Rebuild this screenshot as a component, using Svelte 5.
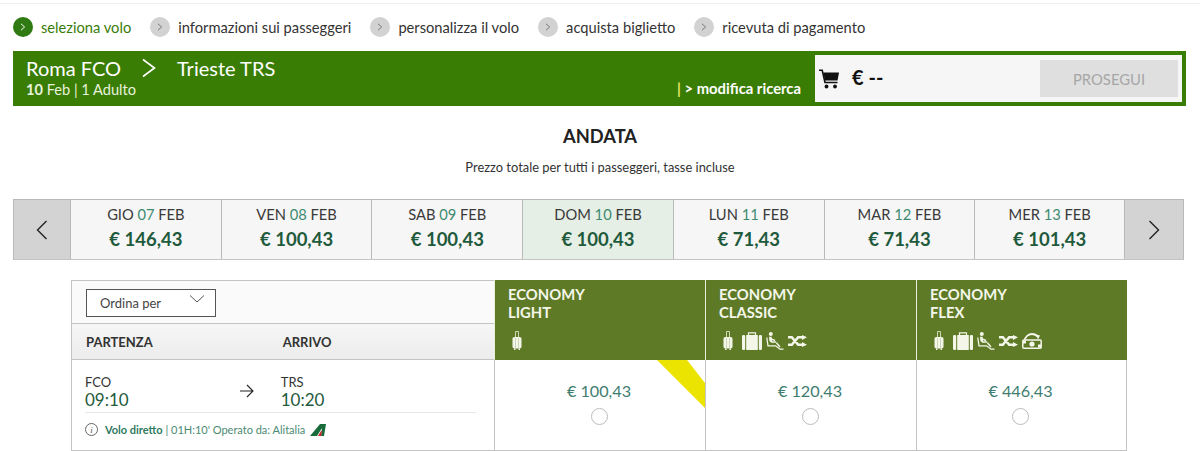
<script lang="ts">
	const STEPS = ['seleziona volo', 'informazioni sui passeggeri', 'personalizza il volo', 'acquista biglietto', 'ricevuta di pagamento'];
	const DAYS = [
		{ dow: 'GIO', num: '07', price: '€ 146,43' },
		{ dow: 'VEN', num: '08', price: '€ 100,43' },
		{ dow: 'SAB', num: '09', price: '€ 100,43' },
		{ dow: 'DOM', num: '10', price: '€ 100,43', selected: true },
		{ dow: 'LUN', num: '11', price: '€ 71,43' },
		{ dow: 'MAR', num: '12', price: '€ 71,43' },
		{ dow: 'MER', num: '13', price: '€ 101,43' }
	];
	const FARES = [
		{ name: 'LIGHT', price: '€ 100,43', icons: ['trolley'], ribbon: true },
		{ name: 'CLASSIC', price: '€ 120,43', icons: ['trolley', 'bag', 'seat', 'shuffle'] },
		{ name: 'FLEX', price: '€ 446,43', icons: ['trolley', 'bag', 'seat', 'shuffle', 'refund'] }
	];
</script>

{#snippet fareIcon(name: string)}
	{#if name === 'trolley'}
		<svg class="icon trolley" width="10" height="19" viewBox="0 0 10 19">
			<path d="M3.500 7V.5h3V7" fill="none" stroke="#cfd9b4" stroke-width="1" />
			<rect x="0.500" y="6" width="9" height="11.500" rx="1.800" fill="#f4f6ea" />
			<path d="M3.500 7v10M6.500 7v10" stroke="#b7c99f" stroke-width="0.700" />
			<path d="M2 17.500h1.500V19H2zM6.500 17.500H8V19H6.500z" fill="#f4f6ea" />
		</svg>
	{:else if name === 'bag'}
		<svg class="icon" width="20" height="18" viewBox="0 0 20 18">
			<path d="M6.500 3V.8h7V3" fill="none" stroke="#f4f6ea" stroke-width="1.200" />
			<rect x="0" y="3" width="3.200" height="15" rx="1.200" fill="#f4f6ea" />
			<rect x="4.200" y="3" width="11.600" height="15" fill="#f4f6ea" />
			<rect x="16.800" y="3" width="3.200" height="15" rx="1.200" fill="#f4f6ea" />
		</svg>
	{:else if name === 'seat'}
		<svg class="icon" width="18" height="18" viewBox="0 0 18 18">
			<circle cx="4.800" cy="2" r="2" fill="#f4f6ea" />
			<path d="M3 4.800h2.600l.6 4.400h4v1.500H5.800l-.4 0L3.400 9Z" fill="#f4f6ea" />
			<path d="M.8 5.500 2 13.800h7.500L14 17.200h3.500" fill="none" stroke="#f4f6ea" stroke-width="1.300" />
			<path d="M5 6.800 9 8.500M10.400 10.700 14 15" fill="none" stroke="#f4f6ea" stroke-width="1.400" />
		</svg>
	{:else if name === 'shuffle'}
		<svg class="icon" width="19" height="12" viewBox="0 0 19 12">
			<path d="M0 2.200h3.800L10.200 9.800H15M0 9.800h3.800L10.200 2.200H15" fill="none" stroke="#f4f6ea" stroke-width="2.600" />
			<path d="M14 0 19 2.300 14 5ZM14 7 19 9.700 14 12Z" fill="#f4f6ea" />
		</svg>
	{:else}
		<svg class="icon" width="20" height="16" viewBox="0 0 20 16">
			<path d="M2.500 8C3 3.500 6.500 1 10 1c2.500 0 4.500 1 6 3" fill="none" stroke="#f4f6ea" stroke-width="1.800" />
			<path d="M14 1.500 18 2.500 16 6.500Z" fill="#f4f6ea" />
			<rect x="0.800" y="7" width="18.400" height="8.200" rx="1" fill="#5f7a26" stroke="#f4f6ea" stroke-width="1.500" />
			<circle cx="10" cy="11" r="2.600" fill="#f4f6ea" />
			<path d="M1 7.500h3v3H1zM16 11.500h3v3h-3z" fill="#f4f6ea" />
		</svg>
	{/if}
{/snippet}

<div class="page">
	<nav class="steps">
		{#each STEPS as step, i}
			<div class="step" class:active={i === 0}>
				<span class="bullet">
					<svg width="6" height="8" viewBox="0 0 6 8"><path d="M1 .8 4.600 4 1 7.200" fill="none" stroke="currentColor" stroke-width="1" /></svg>
				</span>
				<span>{step}</span>
			</div>
		{/each}
	</nav>

	<header class="bar">
		<div class="route">
			<div class="cities">
				<span>Roma FCO</span>
				<svg width="16" height="20" viewBox="0 0 16 20"><path d="M2 1.500 13.500 10 2 18.500" fill="none" stroke="#fff" stroke-width="1.600" /></svg>
				<span>Trieste TRS</span>
			</div>
			<div class="when"><b>10</b> Feb | 1 Adulto</div>
		</div>
		<a class="edit" href="#top"><span class="pipe">|</span> &gt; modifica ricerca</a>
		<div class="cart">
			<svg width="20" height="20" viewBox="0 0 20 20">
				<path d="M0 1.200h3.200L6 13.500h12.500" fill="none" stroke="#111" stroke-width="1.600" />
				<path d="M4.200 3.500H20L18.500 11.500H6Z" fill="#111" />
				<circle cx="7.500" cy="17.500" r="1.900" fill="#111" />
				<circle cx="16" cy="17.500" r="1.900" fill="#111" />
			</svg>
			<span class="total">€ --</span>
			<button class="next" type="button" disabled>PROSEGUI</button>
		</div>
	</header>

	<h1>ANDATA</h1>
	<p class="note">Prezzo totale per tutti i passeggeri, tasse incluse</p>

	<section class="days">
		<button class="arrow" type="button" aria-label="precedente">
			<svg width="12" height="20" viewBox="0 0 12 20"><path d="M10.500 1 1.500 10 10.500 19" fill="none" stroke="#222" stroke-width="1.400" /></svg>
		</button>
		{#each DAYS as day}
			<div class="day" class:selected={day.selected}>
				<div class="date">{day.dow} <span>{day.num}</span> FEB</div>
				<div class="price">{day.price}</div>
			</div>
		{/each}
		<button class="arrow" type="button" aria-label="successivo">
			<svg width="12" height="20" viewBox="0 0 12 20"><path d="M1.500 1 10.500 10 1.500 19" fill="none" stroke="#222" stroke-width="1.400" /></svg>
		</button>
	</section>

	<section class="table">
		<div class="head-left">
			<div class="sort-row">
				<div class="sort">
					<span>Ordina per</span>
					<svg width="16" height="8" viewBox="0 0 16 8"><path d="M1 .5 8 7 15 .5" fill="none" stroke="#555" stroke-width="1" /></svg>
				</div>
			</div>
			<div class="labels">
				<span>PARTENZA</span>
				<span>ARRIVO</span>
			</div>
		</div>
		{#each FARES as fare}
			<div class="fare-head">
				<div class="fare-name">ECONOMY<br />{fare.name}</div>
				<div class="fare-icons">
					{#each fare.icons as icon}
						{@render fareIcon(icon)}
					{/each}
				</div>
			</div>
		{/each}

		<div class="flight">
			<div class="times">
				<div class="place">
					<div class="code">FCO</div>
					<div class="time">09:10</div>
				</div>
				<svg class="to" width="14" height="14" viewBox="0 0 14 14"><path d="M0 7h13M7 1l6 6-6 6" fill="none" stroke="#222" stroke-width="1.100" /></svg>
				<div class="place">
					<div class="code">TRS</div>
					<div class="time">10:20</div>
				</div>
			</div>
			<div class="info">
				<span class="i">i</span>
				<span><b>Volo diretto</b> | 01H:10' Operato da: Alitalia</span>
				<svg width="16" height="12" viewBox="0 0 16 12">
					<path d="M0 12 10 0h6l-2 12h-3l1-8-5 8Z" fill="#1a6b3c" />
					<path d="M8 12l3-5h1l-1 5Z" fill="#c8242b" />
				</svg>
			</div>
		</div>
		{#each FARES as fare}
			<div class="fare" class:ribboned={fare.ribbon}>
				<div class="fare-price">{fare.price}</div>
				<span class="radio"></span>
			</div>
		{/each}
	</section>
</div>

<style>
	:global(body) {
		margin: 0;
		background: #fff;
	}

	.page {
		width: 1200px;
		height: 451px;
		overflow: hidden;
		box-sizing: border-box;
		padding-top: 3px;
		font-family: Lato, 'Open Sans', sans-serif;
		color: #2b2b2b;
	}

	.steps {
		display: flex;
		align-items: center;
		height: 48px;
		padding: 0 0 2px 13px;
		border-top: 1px solid #eee;
		box-sizing: border-box;
		font-size: 14.700px;
		color: #333;
	}

	.step {
		display: flex;
		align-items: center;
		gap: 8px;
		margin-right: 19px;
	}

	.step.active {
		color: #3a7d0a;
	}

	.bullet {
		display: flex;
		align-items: center;
		justify-content: center;
		width: 20px;
		height: 20px;
		border-radius: 50%;
		background: #d2d2d2;
		color: #777;
	}

	.active .bullet {
		background: #2f7a12;
		color: #fff;
	}

	.bar {
		display: flex;
		align-items: stretch;
		margin: 0 14px 0 13px;
		height: 55px;
		box-sizing: border-box;
		padding: 4px;
		background: #3a7d05;
		color: #fff;
	}

	.route {
		flex: 1;
		padding-left: 9px;
	}

	.cities {
		display: flex;
		align-items: center;
		gap: 20px;
		font-size: 20px;
		line-height: 26px;
	}

	.when {
		font-size: 14.600px;
		line-height: 17px;
		color: #e8f2dc;
	}

	.edit {
		align-self: flex-end;
		margin: 0 14px 5px 0;
		font-size: 14.800px;
		font-weight: 700;
		color: #fff;
		text-decoration: none;
	}

	.pipe {
		color: #e7e86a;
	}

	.cart {
		display: flex;
		align-items: flex-start;
		width: 367px;
		box-sizing: border-box;
		padding: 5px 4px 5px 4px;
		background: #f6f6f6;
		color: #111;
	}

	.cart svg {
		margin-top: 9px;
	}

	.total {
		flex: 1;
		margin: 4px 0 0 13px;
		font-size: 20px;
		font-weight: 700;
		line-height: 26px;
	}

	.next {
		width: 138px;
		height: 37px;
		border: 0;
		background: #dfdfdf;
		color: #a6a6a6;
		font: 400 14.800px Lato, sans-serif;
	}

	h1 {
		margin: 19px 0 0;
		text-align: center;
		font-size: 18.300px;
		line-height: 22px;
		font-weight: 700;
		color: #222;
	}

	.note {
		margin: 12px 0 0;
		text-align: center;
		font-size: 12.900px;
		line-height: 16px;
		color: #333;
	}

	.days {
		display: grid;
		grid-template-columns: 56px repeat(7, 1fr) 58px;
		margin: 24px 16px 0 13px;
		height: 61px;
		box-sizing: border-box;
		border: 1px solid #b9b9b9;
		border-bottom-color: #c4c4c4;
		background: #f6f6f6;
	}

	.arrow {
		display: flex;
		align-items: center;
		justify-content: center;
		padding: 0;
		border: 0;
		background: #d3d3d3;
	}

	.day {
		border-left: 1px solid #b9b9b9;
		text-align: center;
		padding-top: 5px;
	}

	.day:nth-last-child(2) {
		border-right: 1px solid #b9b9b9;
	}

	.day.selected {
		background: #e6efe6;
	}

	.date {
		font-size: 14.700px;
		line-height: 18px;
		color: #3a3a3a;
	}

	.date span {
		color: #3e8a70;
	}

	.price {
		margin-top: 5px;
		font-size: 18.500px;
		line-height: 23px;
		font-weight: 700;
		color: #1f5a3c;
	}

	.table {
		display: grid;
		grid-template-columns: 423px repeat(3, 211px);
		grid-template-rows: 80px 91px;
		margin: 20px 0 0 71px;
		width: 1056px;
	}

	.head-left {
		display: flex;
		flex-direction: column;
		box-sizing: border-box;
		border: 1px solid #c4c4c4;
		border-right: 0;
		border-bottom: 0;
		background: #fff;
	}

	.sort-row {
		height: 43px;
		padding: 8px 14px 0;
		box-sizing: border-box;
		background: #fafafa;
		border-bottom: 1px solid #c4c4c4;
	}

	.sort {
		display: flex;
		justify-content: space-between;
		width: 130px;
		height: 28px;
		box-sizing: border-box;
		padding: 0 10px 0 13px;
		border: 1px solid #555;
		background: #fff;
		font-size: 13px;
		line-height: 27px;
		color: #444;
	}

	.sort svg {
		margin-top: 5px;
	}

	.labels {
		flex: 1;
		display: flex;
		align-items: center;
		gap: 130px;
		padding: 0 14px;
		background: linear-gradient(#f6f6f6, #ececec);
		border-bottom: 1px solid #c4c4c4;
		font-size: 13px;
		font-weight: 700;
		color: #333;
	}

	.fare-head {
		box-sizing: border-box;
		padding: 5px 13px 0;
		background: #5f7a26;
		border-left: 1px solid #e9efd9;
		color: #f4f6ea;
	}

	.fare-name {
		font-size: 14.800px;
		line-height: 18px;
		font-weight: 700;
	}

	.fare-icons {
		display: flex;
		align-items: center;
		gap: 4px;
		margin: 9px 0 0 4px;
		height: 21px;
	}

	.icon {
		flex: none;
	}

	.trolley {
		margin-right: 5px;
	}

	.flight {
		box-sizing: border-box;
		padding: 15px 18px 0 13px;
		border-left: 1px solid #c4c4c4;
		border-bottom: 1px solid #c4c4c4;
	}

	.times {
		display: flex;
		align-items: flex-start;
		height: 37px;
		border-bottom: 1px solid #e8e8e8;
	}

	.code {
		font-size: 13px;
		line-height: 15px;
		color: #333;
	}

	.time {
		font-size: 17px;
		line-height: 19px;
		color: #1f5a3c;
	}

	.to {
		margin: 9px 27px 0 111px;
	}

	.info {
		display: flex;
		align-items: center;
		gap: 7px;
		margin-top: 10px;
		font-size: 11px;
		color: #4b8a72;
	}

	.info svg {
		margin-left: -2px;
	}

	.info b {
		color: #2f7a5e;
	}

	.i {
		display: flex;
		align-items: center;
		justify-content: center;
		width: 13px;
		height: 13px;
		box-sizing: border-box;
		border: 1px solid #666;
		border-radius: 50%;
		font: italic 9px 'Liberation Serif', serif;
		color: #555;
	}

	.fare {
		position: relative;
		overflow: hidden;
		display: flex;
		flex-direction: column;
		align-items: center;
		box-sizing: border-box;
		padding: 21px 2px 0 0;
		border-left: 1px solid #c4c4c4;
		border-bottom: 1px solid #c4c4c4;
	}

	.fare:last-child {
		border-right: 1px solid #c4c4c4;
	}

	/* yellow corner band on the cheapest fare */
	.ribboned::before {
		content: '';
		position: absolute;
		top: 0;
		right: 0;
		width: 48px;
		height: 48px;
		background: #ebe300;
		clip-path: polygon(0 0, 30px 0, 48px 23px, 48px 48px);
	}

	.fare-price {
		position: relative;
		font-size: 16.200px;
		line-height: 20px;
		color: #3e7d70;
	}

	.radio {
		width: 15px;
		height: 15px;
		margin-top: 7px;
		border: 1.500px solid #bbb;
		border-radius: 50%;
		background: #fff;
	}
</style>
